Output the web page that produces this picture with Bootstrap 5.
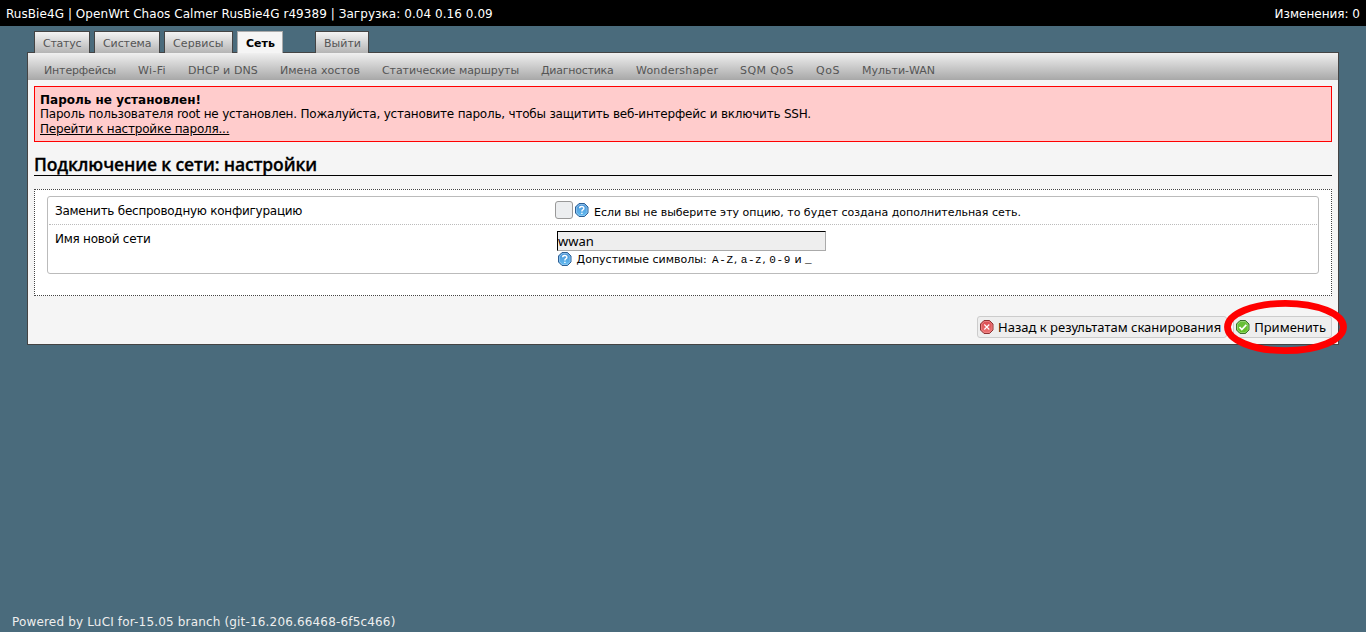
<!DOCTYPE html>
<html lang="ru">
<head>
<meta charset="utf-8">
<title>RusBie4G - LuCI</title>
<meta name="viewport" content="width=device-width, initial-scale=1">
<link href="https://cdn.jsdelivr.net/npm/bootstrap@5.3.0/dist/css/bootstrap.min.css" rel="stylesheet">
<style>
body{background:#4a6b7c;color:#000;font:12px/14px "DejaVu Sans",sans-serif;height:632px;overflow:hidden}
.topbar{height:26px;background:#000;color:#fff;padding:1px 6px 0;white-space:nowrap}
.sysinfo{letter-spacing:.058px}
.tabs{height:26px;padding:5px 0 0 34px;gap:4px}
.tabs a{height:22px;border:1px solid #444;border-bottom:0;background:linear-gradient(#f4f4f4,#b4b4b4);color:#555;font-size:11px;line-height:23px;text-decoration:none;padding:0 8px;white-space:nowrap;z-index:1}
.tabs a.active{background:#f5f5f5;color:#000;font-weight:bold;border-color:#aaa}
.tabs a:nth-child(1){width:56px;letter-spacing:-.25px}
.tabs a:nth-child(2){width:66px;letter-spacing:-.1px}
.tabs a:nth-child(3){width:69px;letter-spacing:.1px}
.tabs a:nth-child(4){width:46px}
.tabs a:nth-child(5){width:54px;margin-left:28px}
.page{margin:0 27px;height:293px;border:1px solid #444;background:#f5f5f5}
.subnav{height:27px;background:linear-gradient(#f0f0f0,#a8a8a8);padding:8px 0 0 16px;gap:22px}
.subnav a{color:#555;font-size:11px;line-height:19px;text-decoration:none;white-space:nowrap}
.subnav a:nth-child(1){width:72px;letter-spacing:-.15px}
.subnav a:nth-child(2){width:28px;letter-spacing:.35px}
.subnav a:nth-child(3){width:70px;letter-spacing:.1px}
.subnav a:nth-child(4){width:80px;letter-spacing:.03px}
.subnav a:nth-child(5){width:137px;letter-spacing:-.07px}
.subnav a:nth-child(6){width:73px;letter-spacing:-.25px}
.subnav a:nth-child(7){width:82px;letter-spacing:.19px}
.subnav a:nth-child(8){width:54px;letter-spacing:.4px}
.subnav a:nth-child(9){width:24px;letter-spacing:.5px}
.warn{margin:6px 6px 0;height:56px;border:1px solid #f00;background:#fcc;padding:6px 5px}
.warn div{height:14px;line-height:14px;letter-spacing:-.208px;white-space:nowrap}
.warn b{letter-spacing:0}
.warn div:last-child{height:15px;line-height:16px}
.warn a{color:#000}
.title{margin:12px 6px 0;height:22px;border-bottom:1px solid #000;font:600 17.5px/20px "Open Sans",sans-serif;letter-spacing:-.13px;-webkit-text-stroke:.3px #000}
.outer{margin:13px 6px 0;height:107px;border:1px dotted #444;background:#fff;padding:6px 12px}
.inner{height:78px;border:1px solid #bbb;border-radius:3px}
.opt{padding:0 7px}
.opt1{height:28px;border-bottom:1px dotted #bbb;margin:0 1px;padding:0 6px}
.lab{width:500px;flex:none;padding-top:7px;letter-spacing:-.25px}
.cb{width:18px;height:18px;border:1px solid #999;border-radius:3px;background:#eceef0;margin:4px 0 0;appearance:none}
.hint{font-size:11px;white-space:nowrap}
.hint code{font:11px "Liberation Mono",monospace;letter-spacing:.6px;color:#000}
.hint code:first-child{margin-left:2px}
.tip1{margin:9px 0 0 4px;letter-spacing:-.01px}
.icon1{margin:6px 0 0 2px}
.inp{width:269px;height:20px;border:1px solid #aaa;border-top-color:#000;border-left-color:#000;background:#eee;font:13px/18px "Noto Sans",sans-serif;padding:0;border-radius:0;display:block;margin:6px 0 0 2px;outline:0}
.row2{height:16px;padding-left:2.6px;gap:4px}
.row2 .hint{padding-top:1px}
.acts{margin:20px 6px 0;gap:6px}
.act{height:22px;border:1px solid #ccc;border-radius:3px;background:#eee;font:13px/20px "Noto Sans",sans-serif;color:#000;padding:0 5px 0 2px;white-space:nowrap;gap:3px}
.act svg{margin-top:3px}
svg{display:block;flex:none}
.ring{position:absolute;left:1223px;top:299px}
.foot{position:absolute;left:12px;top:615px;color:#eee;letter-spacing:.168px;white-space:nowrap}
</style>
<script src="https://cdn.jsdelivr.net/npm/bootstrap@5.3.0/dist/js/bootstrap.bundle.min.js"></script>
</head>
<body class="position-relative">
<svg width="0" height="0" class="position-absolute">
<defs>
<linearGradient id="blue" x2="0" y2="1"><stop offset="0" stop-color="#4a90d4"/><stop offset="1" stop-color="#62bdf2"/></linearGradient>
<linearGradient id="red" x2="0" y2="1"><stop offset="0" stop-color="#d84a50"/><stop offset="1" stop-color="#ec7474"/></linearGradient>
<linearGradient id="green" x2="0" y2="1"><stop offset="0" stop-color="#6abf40"/><stop offset="1" stop-color="#62c024"/></linearGradient>
<symbol id="help" viewBox="0 0 15 15"><path d="M4 .5h5.500L13 4v6L9.500 13.500H4L.5 10V4z" fill="url(#blue)" stroke="#2d5f94"/><path d="M4.500 1.500h4.600L12 4.400v5.200L9.100 12.500H4.500L1.500 9.600V4.400z" fill="none" stroke="#9ccbf0" stroke-width=".7"/><path d="M4.700 5.200Q4.700 3.500 6.800 3.500T8.900 5.200Q8.900 6.300 7.700 6.900Q6.900 7.300 6.900 8.500M6.900 9.700v1.400" fill="none" stroke="#fff" stroke-width="1.400"/></symbol>
<symbol id="cross" viewBox="0 0 15 15"><path d="M4 .5h5.500L13 4v6L9.500 13.500H4L.5 10V4z" fill="url(#red)" stroke="#8d3434"/><path d="M4.500 1.500h4.600L12 4.400v5.200L9.100 12.500H4.500L1.500 9.600V4.400z" fill="none" stroke="#f08c8c" stroke-width=".7"/><path d="M4.300 4.500l5 5M9.300 4.500l-5 5" stroke="#fff" stroke-width="1.100"/></symbol>
<symbol id="check" viewBox="0 0 15 15"><path d="M4 .5h5.500L13 4v6L9.500 13.500H4L.5 10V4z" fill="url(#green)" stroke="#3d7030"/><path d="M4.500 1.500h4.600L12 4.400v5.200L9.100 12.500H4.500L1.500 9.600V4.400z" fill="none" stroke="#a2dc82" stroke-width=".7"/><path d="M3.500 7l2.300 2.500 4.500-4.700" fill="none" stroke="#fff" stroke-width="1.700"/></symbol>
</defs>
</svg>
<header class="topbar d-flex justify-content-between align-items-center"><span class="sysinfo">RusBie4G | OpenWrt Chaos Calmer RusBie4G r49389 | Загрузка: 0.04 0.16 0.09</span><span>Изменения: 0</span></header>
<nav class="tabs d-flex"><a href="#">Статус</a><a href="#">Система</a><a href="#">Сервисы</a><a href="#" class="active">Сеть</a><a href="#">Выйти</a></nav>
<main class="page">
<nav class="subnav d-flex"><a href="#">Интерфейсы</a><a href="#">Wi-Fi</a><a href="#">DHCP и DNS</a><a href="#">Имена хостов</a><a href="#">Статические маршруты</a><a href="#">Диагностика</a><a href="#">Wondershaper</a><a href="#">SQM QoS</a><a href="#">QoS</a><a href="#">Мульти-WAN</a></nav>
<div class="warn"><div><b>Пароль не установлен!</b></div><div>Пароль пользователя root не установлен. Пожалуйста, установите пароль, чтобы защитить веб-интерфейс и включить SSH.</div><div><a href="#">Перейти к настройке пароля...</a></div></div>
<h2 class="title">Подключение к сети: настройки</h2>
<section class="outer"><div class="inner">
<div class="opt1 d-flex"><label class="lab" for="replace">Заменить беспроводную конфигурацию</label><input type="checkbox" id="replace" class="cb"><svg class="icon1" width="15" height="15"><use href="#help"/></svg><span class="hint tip1">Если вы не выберите эту опцию, то будет создана дополнительная сеть.</span></div>
<div class="opt d-flex"><label class="lab" for="netname">Имя новой сети</label><div><input class="inp" id="netname" value="wwan"><div class="row2 d-flex align-items-center"><svg width="15" height="15"><use href="#help"/></svg><span class="hint">Допустимые символы: <code>A-Z</code>, <code>a-z</code>, <code>0-9</code> и <code>_</code></span></div></div></div>
</div></section>
<div class="acts d-flex justify-content-end"><button class="act d-flex"><svg width="15" height="15"><use href="#cross"/></svg>Назад к результатам сканирования</button><button class="act d-flex"><svg width="15" height="15"><use href="#check"/></svg>Применить</button></div>
</main>
<svg class="ring" width="125" height="56"><ellipse cx="62.500" cy="28" rx="58" ry="23.700" fill="none" stroke="#f00" stroke-width="6.800"/></svg>
<footer class="foot">Powered by LuCI for-15.05 branch (git-16.206.66468-6f5c466)</footer>
</body>
</html>
